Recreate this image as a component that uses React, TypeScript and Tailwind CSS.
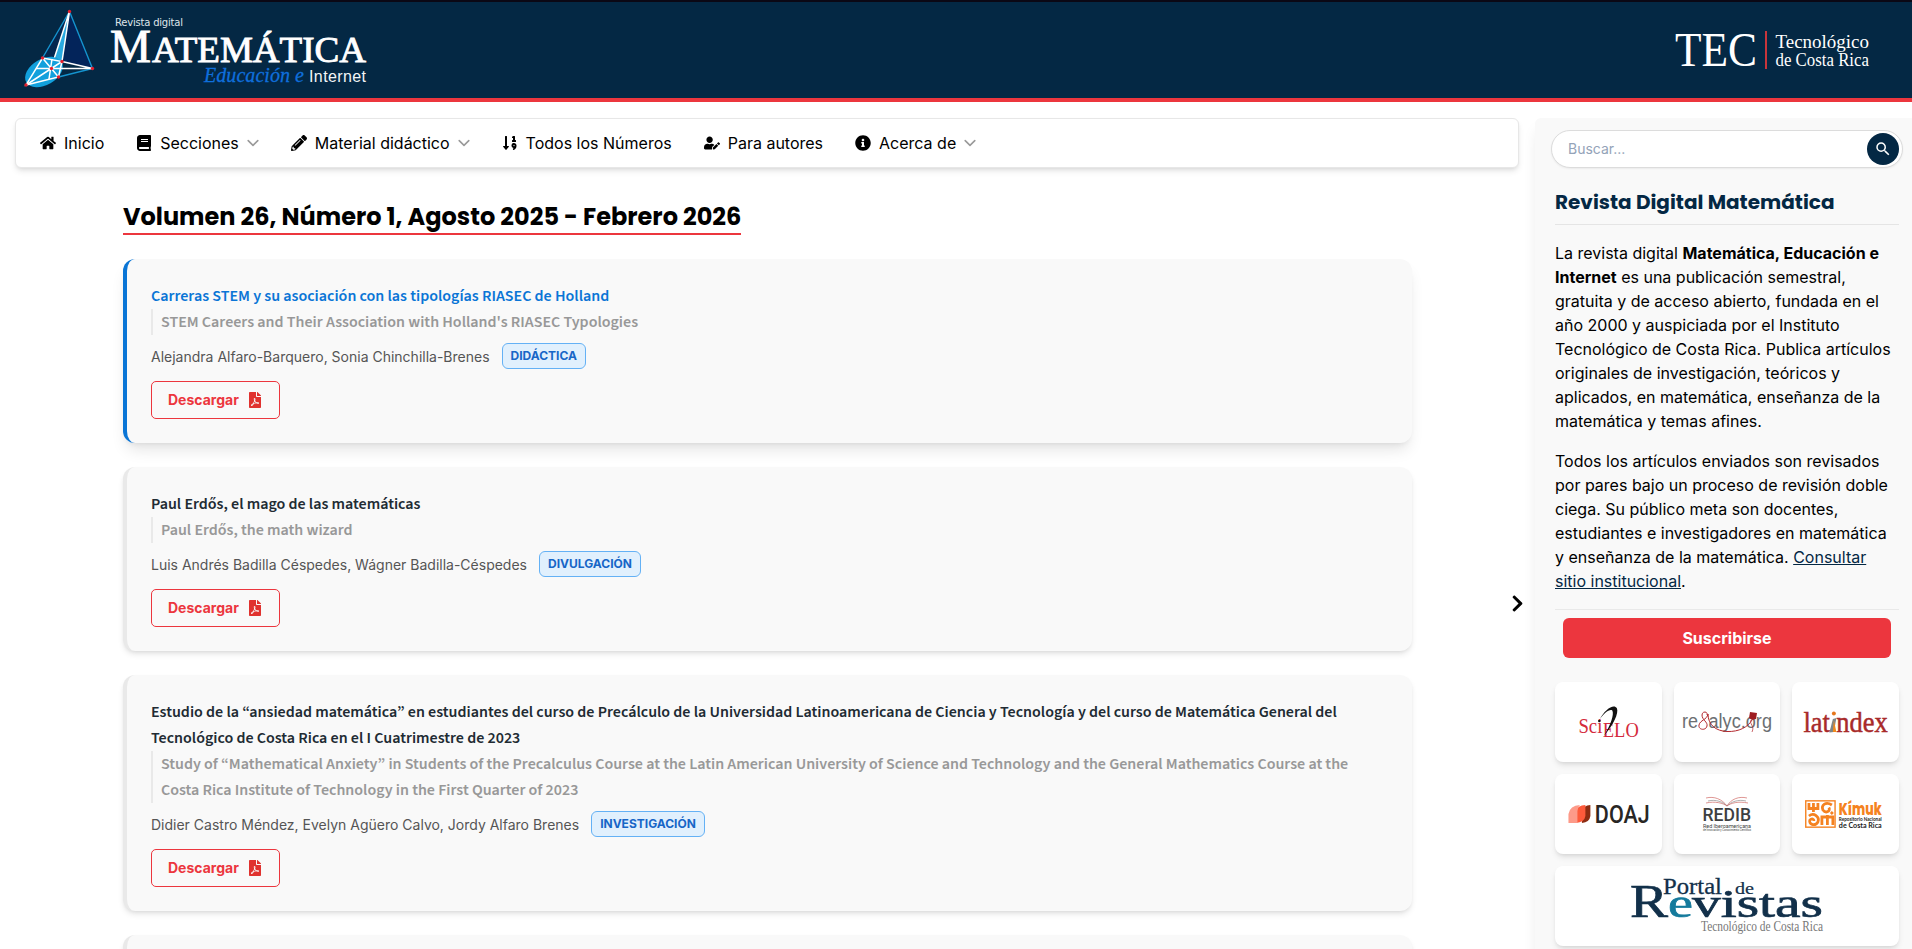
import type { ReactNode } from "react";
import {
  FaBook,
  FaChevronRight,
  FaFilePdf,
  FaHome,
  FaInfoCircle,
  FaPencilAlt,
  FaSortNumericDown,
  FaUserEdit,
} from "react-icons/fa";
import { MdSearch } from "react-icons/md";

type Article = { title: string; english: string; authors: string; tag: string; active?: boolean };

const articles: Article[] = [
  {
    title: "Carreras STEM y su asociación con las tipologías RIASEC de Holland",
    english: "STEM Careers and Their Association with Holland's RIASEC Typologies",
    authors: "Alejandra Alfaro-Barquero, Sonia Chinchilla-Brenes",
    tag: "DIDÁCTICA",
    active: true,
  },
  {
    title: "Paul Erdős, el mago de las matemáticas",
    english: "Paul Erdős, the math wizard",
    authors: "Luis Andrés Badilla Céspedes, Wágner Badilla-Céspedes",
    tag: "DIVULGACIÓN",
  },
  {
    title:
      "Estudio de la “ansiedad matemática” en estudiantes del curso de Precálculo de la Universidad Latinoamericana de Ciencia y Tecnología y del curso de Matemática General del Tecnológico de Costa Rica en el I Cuatrimestre de 2023",
    english:
      "Study of “Mathematical Anxiety” in Students of the Precalculus Course at the Latin American University of Science and Technology and the General Mathematics Course at the Costa Rica Institute of Technology in the First Quarter of 2023",
    authors: "Didier Castro Méndez, Evelyn Agüero Calvo, Jordy Alfaro Brenes",
    tag: "INVESTIGACIÓN",
  },
];

function JournalLogo() {
  return (
    <svg width="370" height="96" viewBox="0 2 370 96" aria-label="Revista digital Matemática">
      <path d="M69.5 11.5L92.5 68.5L62 61.5Z" fill="#03245a" />
      <path d="M42.5 58L69.5 11.5L54 58Z" fill="#04264f" />
      <ellipse cx="44" cy="72" rx="20.5" ry="13" transform="rotate(-30 44 72)" fill="#12a0dc" />
      <path d="M69.5 11.5L62 61.5L55 57Z" fill="#29a9e0" />
      <g fill="none" stroke="#1594cf" strokeWidth="1.4">
        <path d="M42.5 58L69.5 11.5L92.5 68.5L58.5 77" />
      </g>
      <g fill="none" stroke="#fff" strokeWidth="1.5">
        <path d="M69.5 11.5L54.5 57.5M69.5 11.5L62 61.5" />
        <path d="M42.5 58L62 61.5L58.5 77L26 85Z" />
        <path d="M42.5 58L58.5 77M26 85L62 61.5M36 68.5H92.5M62 61.5L92.5 68.5M52 59L49 79" />
      </g>
      <g fill="#e3202e">
        <circle cx="69.5" cy="11.5" r="1.7" />
        <circle cx="42.5" cy="58" r="1.7" />
        <circle cx="26" cy="85" r="1.7" />
        <circle cx="92.5" cy="68.5" r="1.7" />
        <circle cx="62" cy="61.5" r="1.7" />
        <circle cx="51.5" cy="68.5" r="1.7" />
        <circle cx="58.5" cy="77" r="1.7" />
      </g>
      <text x="115" y="25.5" fontSize="10" fontFamily="DejaVu Sans, sans-serif" fill="#dfe5ea" textLength="68">
        Revista digital
      </text>
      <g fontFamily="Liberation Serif, serif" fill="#fff" stroke="#fff" strokeWidth="0.9">
        <text x="110" y="61.5" fontSize="47" textLength="41" lengthAdjust="spacingAndGlyphs">M</text>
        <text x="152" y="61.5" fontSize="36" textLength="214" lengthAdjust="spacingAndGlyphs">ATEMÁTICA</text>
      </g>
      <text
        x="204"
        y="82"
        fontSize="20"
        fontStyle="italic"
        fontFamily="Liberation Serif, serif"
        fill="#0f6fdc"
        stroke="#0f6fdc"
        strokeWidth="0.3"
        textLength="100"
      >
        Educación e
      </text>
      <text x="309" y="82" fontSize="16" fontFamily="Liberation Sans, sans-serif" fill="#f2f5f7" textLength="57">
        Internet
      </text>
    </svg>
  );
}

function TecLogo() {
  return (
    <svg width="220" height="96" viewBox="1660 2 220 96" aria-label="TEC">
      <g fontFamily="Liberation Serif, serif" fill="#fff">
        <text x="1675" y="66" fontSize="48" textLength="82" lengthAdjust="spacingAndGlyphs">TEC</text>
        <text x="1775.5" y="47.5" fontSize="18.5" textLength="93.5" lengthAdjust="spacingAndGlyphs">Tecnológico</text>
        <text x="1775.5" y="66" fontSize="18.5" textLength="93.5" lengthAdjust="spacingAndGlyphs">de Costa Rica</text>
      </g>
      <rect x="1765" y="31" width="2" height="38" fill="#c8353b" />
    </svg>
  );
}

function NavItem({ icon, label, menu }: { icon: ReactNode; label: string; menu?: boolean }) {
  return (
    <a className="flex items-center gap-2 text-base text-black">
      {icon}
      <span>{label}</span>
      {menu && (
        <svg width="12" height="12" viewBox="0 0 12 12" fill="none" stroke="#9a9a9a" strokeWidth="1.6">
          <path d="M1.2 3.6L6 8.4L10.8 3.6" strokeLinecap="round" strokeLinejoin="round" />
        </svg>
      )}
    </a>
  );
}

function ArticleCard({ a }: { a: Article }) {
  const look = a.active ? "border-[#0a75d6] shadow-lg" : "border-[#e9e9e9] shadow-md";
  return (
    <article className={`rounded-xl border-l-4 bg-[#f9f9f9] p-6 ${look}`}>
      <div className="font-['Source_Sans_3','Noto_Sans_CJK_SC',sans-serif] text-base leading-[26px] font-semibold">
        <h3 className={a.active ? "text-[#0a75d6]" : "text-[#212b33]"}>{a.title}</h3>
        <p className="border-l-2 border-[#e9e9e9] pl-2 text-[#989898]">{a.english}</p>
      </div>
      <div className="mt-2 flex h-[26px] items-center gap-3">
        <span className="pt-[2px] text-sm text-[#555]">{a.authors}</span>
        <span className="flex h-[26px] items-center rounded-md border border-[#64b1f5] bg-[#e1f0fd] px-2 text-xs font-bold text-[#1766c7]">
          {a.tag}
        </span>
      </div>
      <button className="mt-3 flex h-[38px] w-[129px] items-center gap-2 rounded-[5px] border border-[#ec363e] pl-4 text-sm font-bold text-[#ec363e]">
        Descargar
        <FaFilePdf size={16} color="#e0322f" />
      </button>
    </article>
  );
}

function LogoCard({ children, wide }: { children: ReactNode; wide?: boolean }) {
  return (
    <div
      className={`flex h-20 items-center justify-center overflow-hidden rounded-lg bg-white shadow-md ${wide ? "col-span-3" : ""}`}
    >
      {children}
    </div>
  );
}

function Scielo() {
  return (
    <svg width="107" height="80" viewBox="0 0 107 80">
      <g fontFamily="Liberation Serif, serif" fill="#d42a3c">
        <text x="23.5" y="51" fontSize="20" textLength="24" lengthAdjust="spacingAndGlyphs">Sci</text>
        <text x="48" y="55.5" fontSize="20.5" textLength="36" lengthAdjust="spacingAndGlyphs">ELO</text>
      </g>
      <path d="M44.5 38C50 27 59 21.5 62 26C64.5 31 58 44 49 54C56 43 59.5 32 57.5 28.5C55 26.5 49 31 44.5 38Z" fill="#111" />
      <circle cx="44.5" cy="39" r="1.3" fill="#111" />
    </svg>
  );
}

function Redalyc() {
  return (
    <svg width="106" height="80" viewBox="0 0 106 80">
      <g fontFamily="Liberation Sans, sans-serif" fontSize="20" fill="#6c6f72">
        <text x="8" y="46" textLength="16" lengthAdjust="spacingAndGlyphs">re</text>
        <text x="34.5" y="46" textLength="63.5" lengthAdjust="spacingAndGlyphs">alyc.org</text>
      </g>
      <path
        d="M33 33C34 29 28 29 28 33C28 38 34 40 33 44C32 49 24 48 25 43C26 38 33 38 34 32C34 43 42 49 53 49.5C65 50 74 45 78 38"
        fill="none"
        stroke="#b3282d"
        strokeWidth="1"
      />
      <path d="M76 30L83 31L82 37L78 38L75 36Z" fill="#9e1c20" />
      <path d="M77 38C75 42 81 44 78 50" fill="none" stroke="#b3282d" strokeWidth="0.7" />
    </svg>
  );
}

function Latindex() {
  return (
    <svg width="107" height="80" viewBox="0 0 107 80">
      <g fontFamily="Liberation Serif, serif" fontSize="30" fill="#a82a2a" stroke="#a82a2a" strokeWidth="0.5">
        <text x="11.5" y="50.5" textLength="26.5" lengthAdjust="spacingAndGlyphs">lat</text>
        <text x="44.5" y="50.5" textLength="51.5" lengthAdjust="spacingAndGlyphs">ndex</text>
      </g>
      <circle cx="42" cy="31.5" r="2" fill="#e5761b" />
      <path d="M41 37L44.5 36L42 50L37.5 50.5Z" fill="#7d8587" />
      <path d="M42 38L44.5 50H41Z" fill="#ef8a1d" />
    </svg>
  );
}

function Doaj() {
  return (
    <svg width="107" height="80" viewBox="0 0 107 80">
      <path d="M27 49V37Q28.5 31.5 35.5 31V42Q34.5 48.5 27 49Z" fill="#8d2c12" />
      <path d="M21 49V37Q22.5 31.5 30.5 31V42Q29.5 48.5 21 49Z" fill="#fd5a3b" />
      <path d="M13.5 49V40Q15 31.5 25 31Q22.5 33 22.5 37V49Z" fill="#fd9a89" />
      <text
        x="40"
        y="49.5"
        fontSize="25"
        fontFamily="Roboto, sans-serif"
        fontWeight="500"
        fill="#282624"
        textLength="55"
        lengthAdjust="spacingAndGlyphs"
      >
        DOAJ
      </text>
    </svg>
  );
}

function Redib() {
  return (
    <svg width="106" height="80" viewBox="0 0 106 80">
      <g fill="none" stroke="#d06a66" strokeWidth="0.7">
        <path d="M32 24C40 22 48 25 53 32C57 25 65 22 73 24" />
        <path d="M34 27C42 25 49 28 53 32C57 28 64 25 72 27" stroke="#8f8f8f" />
        <path d="M32 29C41 27 49 29 53 32C57 29 64 27 74 29" />
      </g>
      <g fontFamily="Roboto, sans-serif" fill="#3d3f41">
        <text x="28.5" y="47" fontSize="17.5" fontWeight="500" textLength="48.5" lengthAdjust="spacingAndGlyphs">REDIB</text>
        <text x="29" y="53.5" fontSize="5" textLength="48" lengthAdjust="spacingAndGlyphs">Red Iberoamericana</text>
        <text x="29" y="57" fontSize="2.8" textLength="48" lengthAdjust="spacingAndGlyphs">
          de Innovación y Conocimiento Científico
        </text>
      </g>
    </svg>
  );
}

function Kimuk() {
  return (
    <svg width="107" height="80" viewBox="0 0 107 80">
      <rect x="13.8" y="26.8" width="29.4" height="26.4" fill="#fff" stroke="#f58220" strokeWidth="1.4" />
      <g fill="none" stroke="#f58220" strokeWidth="2.8">
        <path d="M17 29V34.5H26V29M21.5 29V38" />
        <path d="M40 31C34 27 29 31 31 36C34 40 39 37 37 33.5M39 38L41 40" />
        <path d="M17 42C22 38 28 43 26 48C23 53 16 50 18 46C20 44 22 45 22 47" />
        <path d="M30 51V43H41V51M35.5 41V51" />
      </g>
      <text
        x="47"
        y="41.5"
        fontSize="17"
        fontFamily="Poppins, Lato, sans-serif"
        fontWeight="800"
        fill="#f58220"
        textLength="43"
        lengthAdjust="spacingAndGlyphs"
      >
        Kímuk
      </text>
      <g fontFamily="Lato, sans-serif" fontWeight="700" fill="#222">
        <text x="47" y="47.5" fontSize="4.6" textLength="43" lengthAdjust="spacingAndGlyphs">Repositorio Nacional</text>
        <text x="47" y="54" fontSize="6.5" textLength="43" lengthAdjust="spacingAndGlyphs">de Costa Rica</text>
      </g>
    </svg>
  );
}

function PortalRevistas() {
  return (
    <svg width="344" height="80" viewBox="0 0 344 80" fontFamily="Liberation Serif, serif">
      <g fill="#12304a" stroke="#12304a" strokeWidth="0.7">
        <text x="108" y="28" fontSize="24" strokeWidth="0.3" textLength="59" lengthAdjust="spacingAndGlyphs">Portal</text>
        <text x="180" y="28" fontSize="16" strokeWidth="0.2" textLength="19" lengthAdjust="spacingAndGlyphs">de</text>
        <text x="75" y="51.5" fontSize="46" textLength="38" lengthAdjust="spacingAndGlyphs">R</text>
        <text x="113" y="51.5" fontSize="41" textLength="25" lengthAdjust="spacingAndGlyphs" fill="#157a9c" stroke="#157a9c">e</text>
        <text x="137" y="51.5" fontSize="41" textLength="131" lengthAdjust="spacingAndGlyphs">vistas</text>
      </g>
      <text x="146" y="65" fontSize="15.5" fill="#777" textLength="122" lengthAdjust="spacingAndGlyphs">
        Tecnológico de Costa Rica
      </text>
    </svg>
  );
}

export default function App() {
  return (
    <div className="h-[949px] overflow-hidden bg-white font-['Inter','Liberation_Sans',sans-serif] text-black">
      <header className="flex h-[102px] items-center justify-between border-t-2 border-b-4 border-t-[#0b0815] border-b-[#ec363e] bg-[#042844]">
        <JournalLogo />
        <div className="mr-8">
          <TecLogo />
        </div>
      </header>

      <div className="flex pt-4 pl-[15px]">
        <main className="w-[1504px]">
          <nav className="flex h-[50px] items-center gap-8 rounded-md border border-[#e7e7e7] bg-white pl-6 shadow-md">
            <NavItem icon={<FaHome size={16} />} label="Inicio" />
            <NavItem icon={<FaBook size={16} />} label="Secciones" menu />
            <NavItem icon={<FaPencilAlt size={16} />} label="Material didáctico" menu />
            <NavItem icon={<FaSortNumericDown size={16} />} label="Todos los Números" />
            <NavItem icon={<FaUserEdit size={16} />} label="Para autores" />
            <NavItem icon={<FaInfoCircle size={16} />} label="Acerca de" menu />
          </nav>

          <section className="ml-[108px] w-[1289px]">
            <h2 className="mt-[30px] inline-block h-[37px] border-b-2 border-[#ec363e] font-['Poppins','Inter',sans-serif] text-2xl leading-[38px] font-bold">
              Volumen 26, Número 1, Agosto 2025 - Febrero 2026
            </h2>
            <div className="mt-6 flex flex-col gap-6">
              {articles.map((a) => (
                <ArticleCard key={a.tag} a={a} />
              ))}
              <div className="h-[100px] rounded-xl border-l-4 border-[#e9e9e9] bg-[#f9f9f9] shadow-md" />
            </div>
          </section>
        </main>

        <div className="flex h-[850px] w-4 items-start justify-end pt-[476px]">
          <FaChevronRight size={19} className="mr-2 shrink-0" />
        </div>

        <aside className="h-[850px] w-[377px] rounded-tl-md bg-[#f9f9f9] pt-3 pr-[9px] pl-4 shadow-[0_10px_15px_-3px_rgba(0,0,0,0.1)]">
          <div className="flex h-[38px] items-center justify-between rounded-full border border-[#dcdcdc] bg-white pr-[3px] pl-4 shadow-[0_1px_2px_rgba(0,0,0,0.06)]">
            <span className="text-sm text-[#94a3b8]">Buscar...</span>
            <button className="flex size-8 items-center justify-center rounded-full bg-[#042844] text-white">
              <MdSearch size={18} />
            </button>
          </div>

          <div className="pr-1 pl-1">
            <h2 className="flex h-[57px] items-center border-b border-[#e5e5e5] pt-3 font-['Poppins','Inter',sans-serif] text-xl font-bold text-[#042844]">
              Revista Digital Matemática
            </h2>
            <div className="border-b border-[#e9e9e9] pt-4 pb-4 text-base leading-6">
              <p>
                La revista digital <strong>Matemática, Educación e Internet</strong> es una publicación semestral,
                gratuita y de acceso abierto, fundada en el año 2000 y auspiciada por el Instituto Tecnológico de Costa
                Rica. Publica artículos originales de investigación, teóricos y aplicados, en matemática, enseñanza de
                la matemática y temas afines.
              </p>
              <p className="mt-4">
                Todos los artículos enviados son revisados por pares bajo un proceso de revisión doble ciega. Su público
                meta son docentes, estudiantes e investigadores en matemática y enseñanza de la matemática.{" "}
                <a className="text-[#042844] underline">Consultar sitio institucional</a>.
              </p>
            </div>
            <button className="mx-2 mt-2 h-10 w-[328px] rounded-md bg-[#ec363e] text-base font-bold text-white">
              Suscribirse
            </button>
            <div className="mt-6 grid grid-cols-3 gap-3">
              <LogoCard><Scielo /></LogoCard>
              <LogoCard><Redalyc /></LogoCard>
              <LogoCard><Latindex /></LogoCard>
              <LogoCard><Doaj /></LogoCard>
              <LogoCard><Redib /></LogoCard>
              <LogoCard><Kimuk /></LogoCard>
              <LogoCard wide><PortalRevistas /></LogoCard>
            </div>
          </div>
        </aside>
      </div>
    </div>
  );
}
